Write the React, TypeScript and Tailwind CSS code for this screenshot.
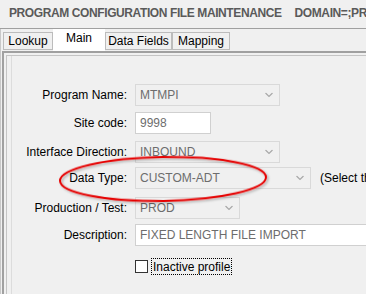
function Chevron() {
  return (
    <svg className="absolute right-[6px] top-1/2 -translate-y-1/2" width="8" height="5" viewBox="0 0 8 5" fill="none">
      <polyline points="0.5,0.5 4,4 7.5,0.5" stroke="#a8a8a8" strokeWidth="1.2" />
    </svg>
  );
}

function Field({ value, width, white, combo }: { value: string; width: string; white?: boolean; combo?: boolean }) {
  return (
    <div
      className={`relative h-[22px] ${width} shrink-0 border ${white ? "bg-white border-[#d0d0d0]" : "bg-[#f0f0f0] border-[#d9d9d9]"} flex items-center pl-[4px] text-[#6d6d6d] whitespace-nowrap overflow-hidden`}
    >
      {value}
      {combo && <Chevron />}
    </div>
  );
}

function Row({ label, children, className }: { label: string; children: React.ReactNode; className?: string }) {
  return (
    <div className={`flex items-center gap-[8px] ${className ?? ""}`}>
      <div className="w-[115px] shrink-0 text-right text-black whitespace-nowrap">{label}</div>
      {children}
    </div>
  );
}

function Tab({ label, active, width }: { label: string; active?: boolean; width: string }) {
  if (active) {
    return (
      <div className={`${width} h-[22px] bg-white flex justify-center pt-[2px] text-black`}>{label}</div>
    );
  }
  return (
    <div className={`${width} h-[18px] mt-[3px] border border-[#bcbcbc] bg-[#f0f0f0] flex items-center justify-center text-black`}>
      {label}
    </div>
  );
}

export default function App() {
  return (
    <div className="relative w-[366px] h-[294px] overflow-hidden bg-[#f0f0f0] font-['Liberation_Sans',Arial,sans-serif] text-[12px] leading-[14px]">
      <div className="h-[29px] border-b border-[#a0a0a0] pl-[9px] pt-[6px] whitespace-nowrap font-bold text-[#5a5a5a] tracking-[-0.4px] flex gap-[13px]">
        <span>PROGRAM CONFIGURATION FILE MAINTENANCE</span>
        <span>DOMAIN=;PROGRAM=MTMPI</span>
      </div>
      <div className="border-l border-[#c8c8c8] h-full">
        <div className="flex items-start h-[22px] pl-[2px]">
          <Tab label="Lookup" width="w-[50px]" />
          <Tab label="Main" active width="w-[52px]" />
          <Tab label="Data Fields" width="w-[67px]" />
          <Tab label="Mapping" width="w-[58px]" />
        </div>
        <div className="ml-[1px] h-full border-t-2 border-l-2 border-[#a0a0a0] pl-[2px] pt-[2px]">
          <div className="h-full border-t border-l border-[#c4c4c4] bg-[#f0f0f0] pl-[4px]">
            <div className="h-full border-l border-[#dcdcdc] pt-[28px]">
              <Row label="Program Name:">
                <Field value="MTMPI" width="w-[145px]" combo />
              </Row>
              <Row label="Site code:" className="mt-[6px]">
                <Field value="9998" width="w-[76px]" white />
              </Row>
              <Row label="Interface Direction:" className="mt-[7px]">
                <Field value="INBOUND" width="w-[145px]" combo />
              </Row>
              <Row label="Data Type:" className="mt-[4px]">
                <Field value="CUSTOM-ADT" width="w-[176px]" combo />
                <span className="whitespace-nowrap text-black ml-[1px]">(Select the data type)</span>
              </Row>
              <Row label="Production / Test:" className="mt-[8px]">
                <Field value="PROD" width="w-[105px]" combo />
              </Row>
              <Row label="Description:" className="mt-[5px]">
                <Field value="FIXED LENGTH FILE IMPORT" width="w-[260px]" white />
              </Row>
              <div className="flex items-center mt-[12px] ml-[123px] gap-[3px]">
                <div className="w-[13px] h-[13px] border border-[#333333] bg-white" />
                <div className="border border-dotted border-black px-[1px] h-[17px] flex items-center text-black whitespace-nowrap">
                  Inactive profile
                </div>
              </div>
            </div>
          </div>
        </div>
      </div>
      <svg className="absolute left-0 top-0 pointer-events-none" width="366" height="294" viewBox="0 0 366 294" fill="none">
        <defs>
          <filter id="sh" x="-10%" y="-50%" width="120%" height="200%">
            <feDropShadow dx="1.5" dy="1.5" stdDeviation="1" floodColor="#000" floodOpacity="0.3" />
          </filter>
        </defs>
        <ellipse cx="163" cy="179" rx="103" ry="22" stroke="#e60000" strokeWidth="2" filter="url(#sh)" transform="rotate(-1 163 179)" />
      </svg>
    </div>
  );
}
